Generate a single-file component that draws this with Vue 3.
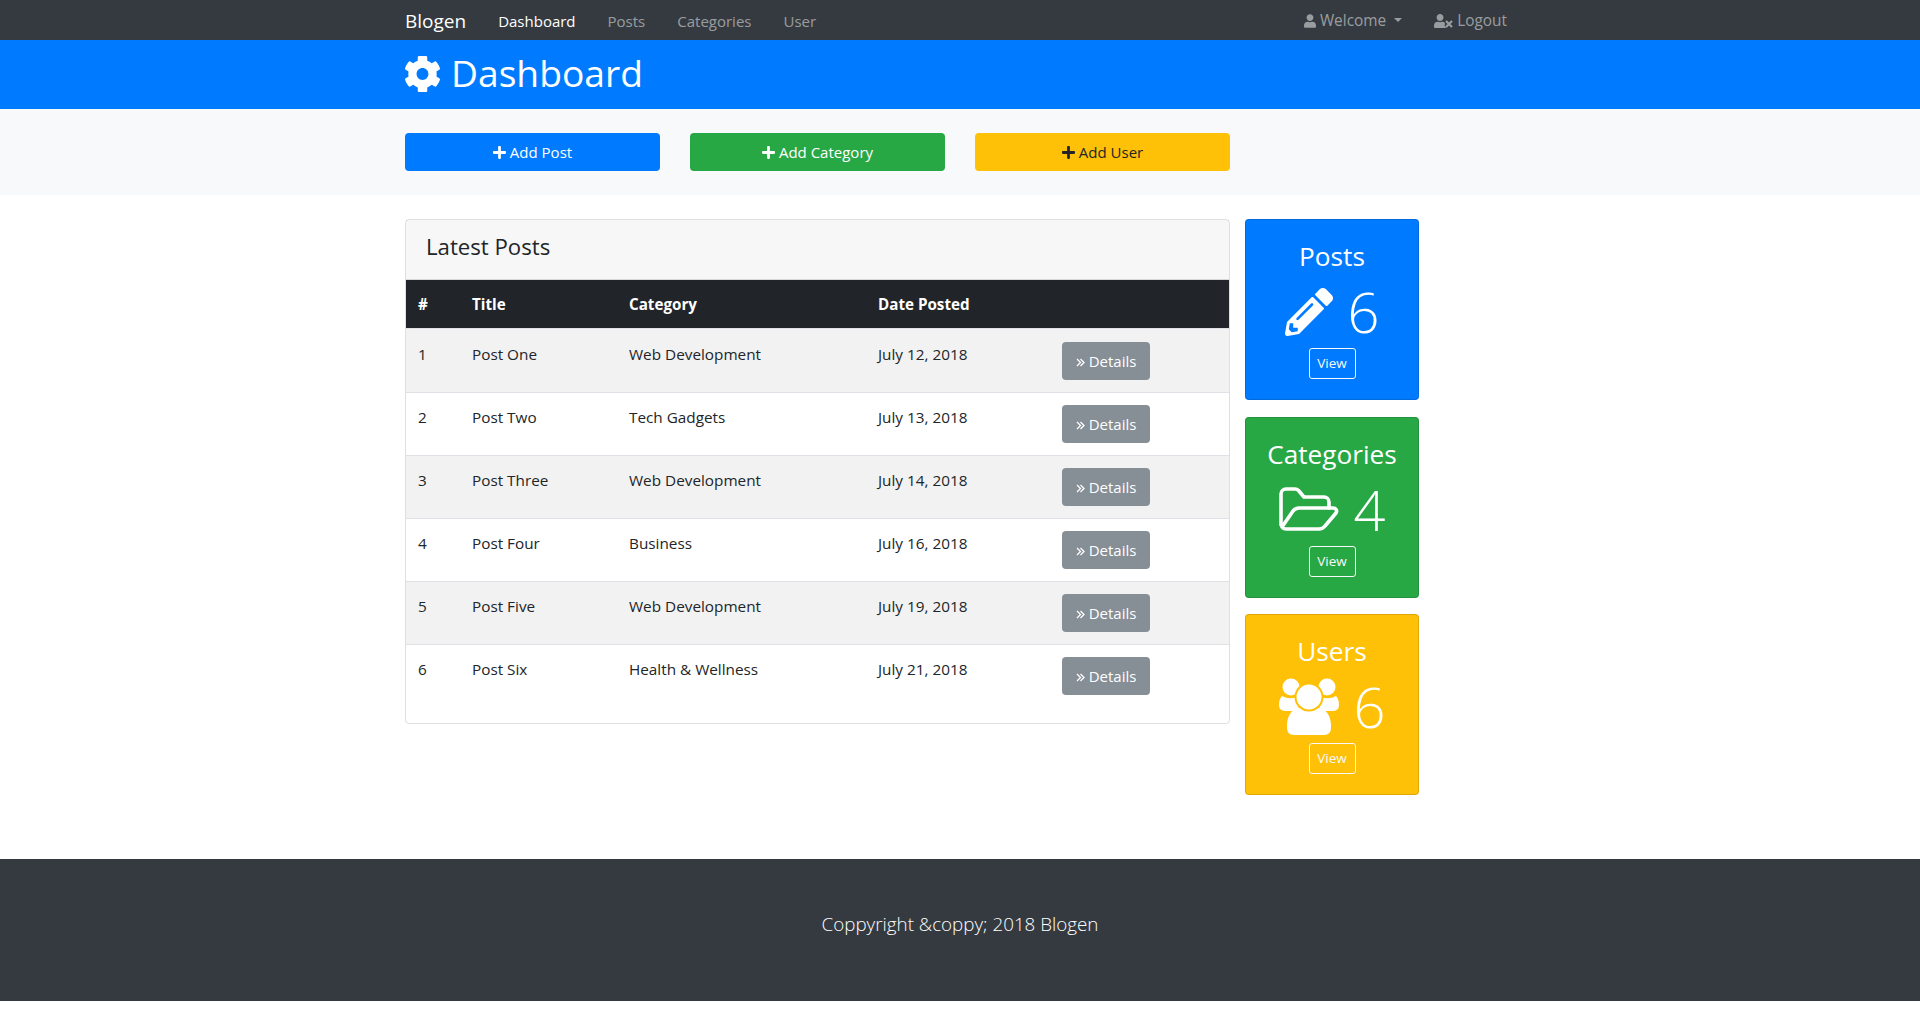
<script setup>
const links = ['Posts', 'Categories', 'User']

const posts = [
  { id: 1, title: 'Post One', category: 'Web Development', date: 'July 12, 2018' },
  { id: 2, title: 'Post Two', category: 'Tech Gadgets', date: 'July 13, 2018' },
  { id: 3, title: 'Post Three', category: 'Web Development', date: 'July 14, 2018' },
  { id: 4, title: 'Post Four', category: 'Business', date: 'July 16, 2018' },
  { id: 5, title: 'Post Five', category: 'Web Development', date: 'July 19, 2018' },
  { id: 6, title: 'Post Six', category: 'Health & Wellness', date: 'July 21, 2018' },
]

const plus = 'M416 208H272V64c0-17.67-14.33-32-32-32h-32c-17.67 0-32 14.33-32 32v144H32c-17.67 0-32 14.33-32 32v32c0 17.67 14.33 32 32 32h144v144c0 17.67 14.33 32 32 32h32c17.67 0 32-14.33 32-32V304h144c17.67 0 32-14.33 32-32v-32c0-17.67-14.33-32-32-32z'
const user = 'M224 256c70.7 0 128-57.3 128-128S294.7 0 224 0 96 57.3 96 128s57.3 128 128 128zm89.6 32h-16.7c-22.2 10.2-46.9 16-72.9 16s-50.6-5.8-72.9-16h-16.7C60.2 288 0 348.2 0 422.4V464c0 26.5 21.5 48 48 48h352c26.5 0 48-21.5 48-48v-41.6c0-74.2-60.2-134.4-134.4-134.4z'
const actions = [
  { label: 'Add Post', cls: 'btn-blue' },
  { label: 'Add Category', cls: 'btn-green' },
  { label: 'Add User', cls: 'btn-yellow' },
]
</script>

<template>
  <nav class="navbar">
    <div class="container nav-inner">
      <span class="brand">Blogen</span>
      <a class="nav-link active">Dashboard</a>
      <a v-for="link in links" :key="link" class="nav-link">{{ link }}</a>
      <div class="nav-right">
        <a class="nav-link">
          <svg class="nav-icon" viewBox="0 0 448 512" width="12" height="14"><path :d="user" /></svg>
          Welcome
          <span class="caret"></span>
        </a>
        <a class="nav-link">
          <svg class="nav-icon" viewBox="0 0 19 14" width="19" height="14">
            <path :d="user" transform="scale(0.0270 0.0273)" />
            <path d="M12 7l6 6m0-6l-6 6" fill="none" stroke="#343a40" stroke-width="5" />
            <path d="M12 7l6 6m0-6l-6 6" fill="none" stroke="#9a9da0" stroke-width="2.200" />
          </svg>
          Logout
        </a>
      </div>
    </div>
  </nav>

  <header class="page-header">
    <div class="container header-inner">
      <svg class="gear" viewBox="19 14 474 484" width="35" height="36">
        <path d="M487.4 315.7l-42.6-24.6c4.3-23.2 4.3-47 0-70.2l42.6-24.6c4.9-2.8 7.1-8.6 5.5-14-11.1-35.6-30-67.8-54.7-94.6-3.8-4.1-10-5.1-14.8-2.3L380.8 110c-17.9-15.4-38.5-27.3-60.8-35.1V25.8c0-5.6-3.9-10.5-9.4-11.7-36.7-8.2-74.3-7.8-109.2 0-5.5 1.2-9.4 6.1-9.4 11.7V75c-22.2 7.9-42.8 19.8-60.8 35.1L88.7 85.5c-4.9-2.8-11-1.9-14.8 2.3-24.7 26.7-43.6 58.9-54.7 94.6-1.7 5.4.6 11.2 5.5 14L67.3 221c-4.3 23.2-4.3 47 0 70.2l-42.6 24.6c-4.9 2.8-7.1 8.6-5.5 14 11.1 35.6 30 67.8 54.7 94.6 3.8 4.1 10 5.1 14.8 2.3l42.6-24.6c17.9 15.4 38.5 27.3 60.8 35.1v49.2c0 5.6 3.9 10.5 9.4 11.7 36.7 8.2 74.3 7.8 109.2 0 5.5-1.2 9.4-6.1 9.4-11.7v-49.2c22.2-7.9 42.8-19.8 60.8-35.1l42.6 24.6c4.9 2.8 11 1.9 14.8-2.3 24.7-26.7 43.6-58.9 54.7-94.6 1.5-5.5-.7-11.3-5.6-14.1zM256 336c-44.1 0-80-35.9-80-80s35.9-80 80-80 80 35.9 80 80-35.9 80-80 80z" />
      </svg>
      <h1>Dashboard</h1>
    </div>
  </header>

  <section class="actions">
    <div class="container actions-inner">
      <a v-for="action in actions" :key="action.label" class="btn" :class="action.cls">
        <svg class="btn-icon" viewBox="0 32 448 448" width="13" height="13"><path :d="plus" /></svg>
        {{ action.label }}
      </a>
    </div>
  </section>

  <section class="content">
    <div class="container content-inner">
      <div class="panel">
        <div class="panel-header"><h4>Latest Posts</h4></div>
        <table>
          <colgroup>
            <col style="width: 54px" />
            <col style="width: 157px" />
            <col style="width: 249px" />
            <col style="width: 184px" />
            <col />
          </colgroup>
          <thead>
            <tr>
              <th>#</th>
              <th>Title</th>
              <th>Category</th>
              <th>Date Posted</th>
              <th></th>
            </tr>
          </thead>
          <tbody>
            <tr v-for="post in posts" :key="post.id">
              <td>{{ post.id }}</td>
              <td>{{ post.title }}</td>
              <td>{{ post.category }}</td>
              <td>{{ post.date }}</td>
              <td class="cell-btn">
                <a class="btn btn-gray">
                  <svg class="chevrons" viewBox="0 0 9 9" width="9" height="9" fill="none" stroke="currentColor" stroke-width="1.300">
                    <path d="M1 1l3.500 3.500L1 8M4.500 1L8 4.500 4.500 8" />
                  </svg>
                  Details
                </a>
              </td>
            </tr>
          </tbody>
        </table>
      </div>

      <aside class="sidebar">
        <div class="stat stat-blue">
          <h3>Posts</h3>
          <div class="stat-row">
            <svg viewBox="0 0 512 512" width="48" height="48" fill="#fff">
              <path d="M497.9 142.1l-46.1 46.1c-4.7 4.7-12.3 4.7-17 0l-111-111c-4.7-4.7-4.7-12.3 0-17l46.1-46.1c18.7-18.7 49.1-18.7 67.9 0l60.1 60.1c18.8 18.7 18.8 49.1 0 67.9zM284.2 99.8L21.6 362.4.4 483.9c-2.9 16.4 11.4 30.6 27.8 27.8l121.5-21.3 262.6-262.6c4.7-4.7 4.7-12.3 0-17l-111-111c-4.8-4.7-12.4-4.7-17.1 0zM124.1 339.9c-5.5-5.5-5.5-14.3 0-19.8l154-154c5.5-5.5 14.3-5.5 19.8 0s5.5 14.3 0 19.8l-154 154c-5.5 5.5-14.3 5.5-19.8 0zM88 424h48v36.3l-64.5 11.3-31.1-31.1L51.7 376H88v48z" />
            </svg>
            <span class="stat-num">6</span>
          </div>
          <a class="view">View</a>
        </div>

        <div class="stat stat-green">
          <h3>Categories</h3>
          <div class="stat-row">
            <svg viewBox="0 0 60 44" width="60" height="44" fill="none" stroke="#fff" stroke-width="3.6" stroke-linejoin="round" stroke-linecap="round">
              <path d="M2 38V7a5 5 0 0 1 5-5h9a5 5 0 0 1 3.500 1.500L25 10h20a5 5 0 0 1 5 5v6" />
              <path d="M3 40c1 1.500 2 2 4 2h33a8 8 0 0 0 6-3l11-13c1.500-2.500 0-5-3-5H20a8 8 0 0 0-6 3z" />
            </svg>
            <span class="stat-num">4</span>
          </div>
          <a class="view">View</a>
        </div>

        <div class="stat stat-yellow">
          <h3>Users</h3>
          <div class="stat-row">
            <svg viewBox="0 0 60 57" width="60" height="57" fill="#fff">
              <circle cx="12" cy="9" r="8.500" />
              <circle cx="48" cy="9" r="8.500" />
              <path d="M3 18q7 4 15 1l2 14H7q-7 0-7-6 0-6 3-9z" />
              <path d="M57 18q-7 4-15 1l-2 14h13q7 0 7-6 0-6-3-9z" />
              <path d="M8 47c0-10 6-17 13-17q9 5 18 0c7 0 13 7 13 17v3q0 7-7 7H15q-7 0-7-7z" />
              <circle cx="30" cy="19" r="13.500" stroke="#ffc107" stroke-width="2" />
            </svg>
            <span class="stat-num">6</span>
          </div>
          <a class="view">View</a>
        </div>
      </aside>
    </div>
  </section>

  <footer class="footer">
    <p>Coppyright &amp;coppy; 2018 Blogen</p>
  </footer>
</template>

<style>
body {
  font-family: "Open Sans", "Noto Sans", sans-serif;
  font-size: 15px;
  line-height: 24px;
  color: #212529;
}
</style>

<style scoped>
.container {
  width: 1110px;
  margin: 0 auto;
}

.navbar {
  background: #343a40;
  height: 40px;
}

.nav-inner {
  display: flex;
  align-items: center;
  height: 40px;
  padding-top: 1px;
  box-sizing: border-box;
}

.brand {
  color: #fff;
  font-size: 19px;
  margin-right: 16px;
}

.nav-link {
  color: rgba(255, 255, 255, 0.5);
  padding: 0 16px;
  display: flex;
  align-items: center;
  gap: 4px;
  white-space: nowrap;
}

.nav-link.active {
  color: #fff;
}

.nav-right {
  display: flex;
  margin-left: auto;
  margin-right: -8px;
  padding-top: 1px;
  font-size: 15.400px;
}

.nav-icon {
  fill: #9a9da0;
}

.caret {
  width: 0;
  height: 0;
  margin-left: 4px;
  margin-top: -3px;
  border-top: 4px solid rgba(255, 255, 255, 0.5);
  border-left: 4px solid transparent;
  border-right: 4px solid transparent;
}

.page-header {
  background: #007bff;
  color: #fff;
  height: 69px;
}

.header-inner {
  display: flex;
  align-items: center;
  gap: 11px;
  height: 65px;
}

.gear {
  fill: #fff;
  margin-top: 2px;
}

h1 {
  margin: 0;
  font-size: 37.200px;
  font-weight: 400;
  line-height: 48px;
}

.actions {
  background: #f8f9fa;
  padding: 24px 0;
  height: 86px;
  box-sizing: border-box;
}

.actions-inner {
  display: flex;
  gap: 30px;
  width: 1110px;
}

.btn {
  display: inline-flex;
  align-items: center;
  justify-content: center;
  gap: 4px;
  height: 38px;
  box-sizing: border-box;
  border-radius: 4px;
  color: #fff;
}

.actions .btn {
  width: 255px;
}

.btn-icon {
  fill: currentColor;
}

.btn-blue {
  background: #007bff;
}

.btn-green {
  background: #28a745;
}

.btn-yellow {
  background: #ffc107;
  color: #212529;
}

.btn-gray {
  background: #868e96;
  width: 88px;
  vertical-align: top;
}

.chevrons {
  margin-top: 2px;
}

.content {
  padding: 24px 0 47px;
}

.content-inner {
  display: flex;
  align-items: flex-start;
}

.panel {
  width: 825px;
  height: 505px;
  box-sizing: border-box;
  border: 1px solid rgba(0, 0, 0, 0.125);
  border-radius: 4px;
}

.panel-header {
  background: rgba(0, 0, 0, 0.03);
  border-bottom: 1px solid rgba(0, 0, 0, 0.125);
  height: 60px;
  padding: 0 20px;
  box-sizing: border-box;
  display: flex;
  align-items: center;
}

h4 {
  margin: 0;
  font-size: 22.200px;
  font-weight: 400;
  line-height: 29px;
  margin-top: -6px;
}

table {
  width: 100%;
  table-layout: fixed;
  border-collapse: collapse;
}

th {
  background: #212529;
  color: #fff;
  text-align: left;
  font-weight: 700;
  font-size: 15.200px;
  padding: 12px;
  height: 48px;
  box-sizing: border-box;
  line-height: 24px;
}

td {
  padding: 12px 12px 11px;
  border-top: 1px solid #dee2e6;
  vertical-align: top;
  height: 63px;
  box-sizing: border-box;
  font-size: 15.300px;
}

tbody tr:first-child td {
  padding-top: 13px;
  height: 64px;
}

td.cell-btn {
  font-size: 15px;
}

tbody tr:nth-child(odd) {
  background: #f2f2f2;
}

.sidebar {
  width: 174px;
  margin-left: 15px;
}

.stat {
  display: flex;
  flex-direction: column;
  align-items: center;
  height: 181px;
  box-sizing: border-box;
  padding: 19px 0;
  margin-bottom: 16.500px;
  border: 1px solid rgba(0, 0, 0, 0.125);
  border-radius: 4px;
  color: #fff;
}

.stat-blue {
  background: #007bff;
}

.stat-green {
  background: #28a745;
}

.stat-yellow {
  background: #ffc107;
}

h3 {
  margin: 0 0 8px;
  font-size: 26.200px;
  font-weight: 400;
  line-height: 34px;
}

.stat-row {
  display: flex;
  align-items: center;
  justify-content: center;
  gap: 15px;
  height: 67px;
  margin-top: -3px;
}

.stat-num {
  font-size: 56px;
  font-weight: 300;
  line-height: 67px;
}

.view {
  display: block;
  width: 47px;
  height: 31px;
  box-sizing: border-box;
  margin-top: 3px;
  border: 1px solid #f8f9fa;
  border-radius: 3px;
  color: #f8f9fa;
  font-size: 13.500px;
  line-height: 29px;
  text-align: center;
}

.footer {
  background: #343a40;
  color: #fff;
  height: 142px;
  padding-bottom: 12px;
  box-sizing: border-box;
  display: flex;
  align-items: center;
  justify-content: center;
}

.footer p {
  margin: 0;
  font-size: 18.800px;
  font-weight: 300;
  line-height: 30px;
}
</style>
